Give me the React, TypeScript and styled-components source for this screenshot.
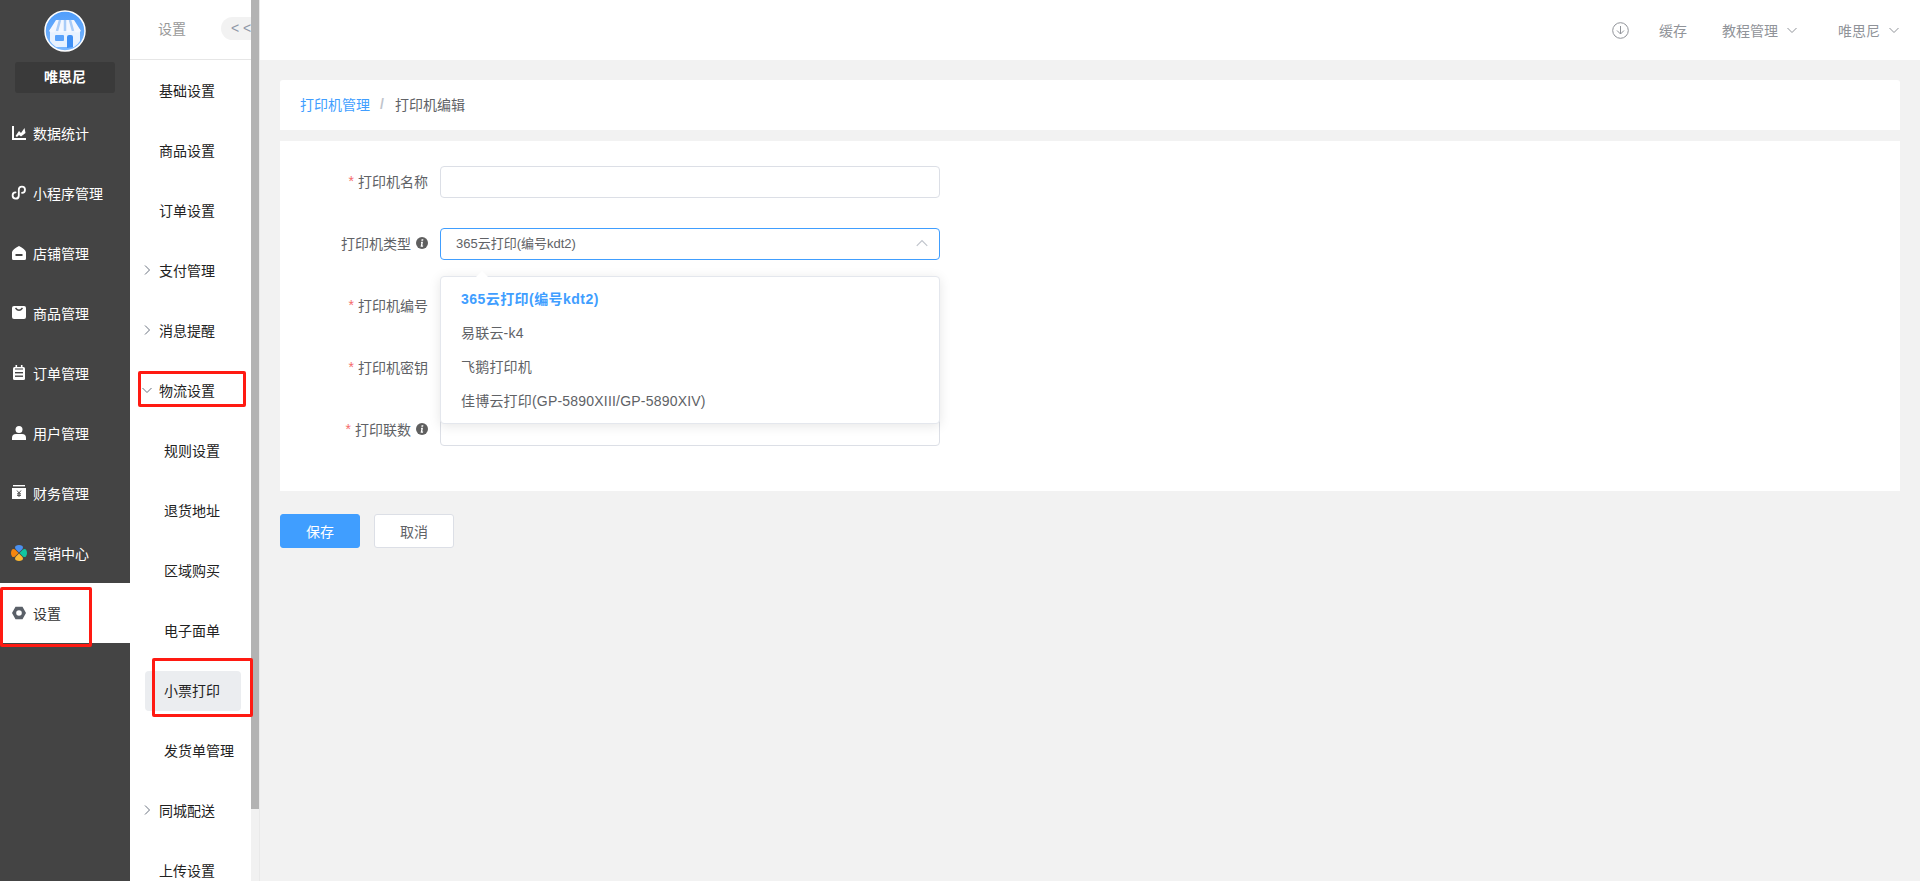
import React from "react";
import styled, { createGlobalStyle } from "styled-components";

const GlobalStyle = createGlobalStyle`
  html, body {
    margin: 0;
    padding: 0;
    height: 100%;
    overflow: hidden;
    background: #f2f2f2;
    font-family: "Liberation Sans", "Noto Sans CJK SC", sans-serif;
    font-size: 14px;
  }
  * {
    box-sizing: border-box;
  }
`;

const Page = styled.div`
  position: relative;
  display: flex;
  width: 1920px;
  height: 881px;
  overflow: hidden;
`;

const Rail = styled.nav`
  flex: 0 0 130px;
  display: flex;
  flex-direction: column;
  background: #444444;
`;

const Brand = styled.div`
  display: flex;
  flex-direction: column;
  align-items: center;
  padding-top: 10px;
  margin-bottom: 10px;
`;

const BrandName = styled.div`
  width: 100px;
  height: 31px;
  margin-top: 10px;
  border-radius: 3px;
  background: #3a3a3a;
  color: #fff;
  font-weight: 700;
  line-height: 31px;
  text-align: center;
`;

const RailItem = styled.div<{ $active?: boolean }>`
  display: flex;
  align-items: center;
  gap: 7px;
  height: 60px;
  padding-left: 12px;
  background: ${(p) => (p.$active ? "#fff" : "transparent")};
  color: ${(p) => (p.$active ? "#333" : "#fff")};
`;

const RailIcon = styled.svg`
  flex: 0 0 14px;
  width: 14px;
  height: 14px;
  overflow: visible;
`;

const SubNav = styled.div`
  flex: 0 0 130px;
  min-width: 0;
  display: flex;
  height: 881px;
  background: #fff;
  border-right: 1px solid #e9e9e9;
`;

const SubPane = styled.div`
  flex: 1;
  min-width: 0;
  overflow: hidden;
`;

const ScrollTrack = styled.div`
  flex: 0 0 8px;
  background: #f1f1f1;
`;

const ScrollThumb = styled.div`
  height: 809px;
  background: #b3b3b3;
`;

const SubHeader = styled.div`
  display: flex;
  align-items: center;
  height: 60px;
  padding: 0 0 3px 28px;
  border-bottom: 1px solid #e6e6e6;
  color: #999;
  white-space: nowrap;
  overflow: hidden;
`;

const Collapse = styled.div`
  flex: 0 0 44px;
  height: 23px;
  margin-left: 35px;
  padding-left: 10px;
  border-radius: 12px;
  background: #f2f2f2;
  color: #8f98a8;
  line-height: 22px;
`;

const SubList = styled.div`
  display: flex;
  flex-direction: column;
  padding-top: 1px;
`;

const SubItem = styled.div`
  display: flex;
  align-items: center;
  height: 60px;
  padding: 0 0 2px 11px;
  color: #222;
`;

const Caret = styled.span`
  display: flex;
  flex: 0 0 18px;
  color: #6b7380;
`;

const SubChild = styled.div<{ $active?: boolean }>`
  height: 40px;
  margin: 10px 10px 10px 15px;
  padding-left: 19px;
  border-radius: 4px;
  background: ${(p) => (p.$active ? "#ebedf0" : "transparent")};
  color: #222;
  line-height: 40px;
  white-space: nowrap;
`;

const Body = styled.div`
  flex: 1;
  min-width: 0;
  display: flex;
  flex-direction: column;
`;

const TopBar = styled.header`
  display: flex;
  align-items: center;
  justify-content: flex-end;
  height: 60px;
  padding-right: 20px;
  background: #fff;
  color: #909399;
`;

const TopLink = styled.div<{ $gap: number }>`
  display: flex;
  align-items: center;
  gap: 8px;
  margin-left: ${(p) => p.$gap}px;
`;

const Main = styled.main`
  padding: 20px 20px 0;
`;

const Crumbs = styled.div`
  display: flex;
  align-items: center;
  height: 50px;
  margin-bottom: 11px;
  padding: 0 0 2px 20px;
  border-radius: 3px 3px 0 0;
  background: #fff;
  color: #606266;
`;

const CrumbLink = styled.span`
  color: #409eff;
`;

const CrumbSep = styled.span`
  margin: 0 11px 0 10px;
  color: #c0c4cc;
  font-weight: 700;
`;

const FormCard = styled.section`
  padding: 25px 0 15px;
  background: #fff;
`;

const Row = styled.div`
  display: flex;
  margin-bottom: 30px;
`;

const Label = styled.label`
  display: flex;
  align-items: center;
  justify-content: flex-end;
  flex: 0 0 160px;
  height: 32px;
  padding: 0 12px 3px 0;
  color: #606266;
`;

const Star = styled.span`
  margin-right: 4px;
  color: #f56c6c;
`;

const InfoIcon = styled.svg`
  width: 12px;
  height: 12px;
  margin-left: 5px;
`;

const Field = styled.div`
  position: relative;
  width: 500px;
  height: 32px;
`;

const Input = styled.input`
  display: block;
  width: 100%;
  height: 100%;
  padding: 0 15px;
  border: 1px solid #dcdfe6;
  border-radius: 4px;
  outline: none;
  background: #fff;
`;

const SelectBox = styled.div`
  display: flex;
  align-items: center;
  justify-content: space-between;
  height: 100%;
  padding: 0 10px 3px 15px;
  border: 1px solid #409eff;
  border-radius: 4px;
  color: #606266;
  font-size: 13px;
`;

const Dropdown = styled.ul`
  position: absolute;
  top: 48px;
  left: 0;
  z-index: 5;
  width: 100%;
  margin: 0;
  padding: 5px 0;
  border: 1px solid #e4e7ed;
  border-radius: 4px;
  background: #fff;
  box-shadow: 0 2px 12px rgba(0, 0, 0, 0.1);
  list-style: none;

  &::before {
    content: "";
    position: absolute;
    top: -6px;
    left: 35px;
    border-width: 0 6px 6px;
    border-style: solid;
    border-color: transparent transparent #fff;
  }
`;

const Option = styled.li<{ $selected?: boolean }>`
  height: 34px;
  padding: 0 20px;
  color: ${(p) => (p.$selected ? "#409eff" : "#606266")};
  font-weight: ${(p) => (p.$selected ? 700 : 400)};
  letter-spacing: ${(p) => (p.$selected ? "0.45px" : "0.2px")};
  line-height: 34px;
`;

const Actions = styled.div`
  display: flex;
  gap: 14px;
  margin-top: 23px;
`;

const Button = styled.button<{ $primary?: boolean }>`
  width: 80px;
  height: 34px;
  padding: 0;
  border: 1px solid ${(p) => (p.$primary ? "#409eff" : "#dcdfe6")};
  border-radius: 3px;
  background: ${(p) => (p.$primary ? "#409eff" : "#fff")};
  color: ${(p) => (p.$primary ? "#fff" : "#606266")};
  font: inherit;
`;

const Callout = styled.div<{ $x: number; $y: number; $w: number; $h: number }>`
  position: absolute;
  left: ${(p) => p.$x}px;
  top: ${(p) => p.$y}px;
  width: ${(p) => p.$w}px;
  height: ${(p) => p.$h}px;
  border: 3px solid #ff1a12;
  border-radius: 2px;
  pointer-events: none;
`;

const Chevron = ({ dir, size = 12, color = "currentColor" }: { dir: "right" | "down" | "up"; size?: number; color?: string }) => {
  const d = dir === "right" ? "M4 1.5 L8.5 6 L4 10.5" : dir === "down" ? "M1.5 4 L6 8.5 L10.5 4" : "M1.5 8.5 L6 4 L10.5 8.5";
  return (
    <svg width={size} height={size} viewBox="0 0 12 12" fill="none" stroke={color} strokeWidth="1">
      <path d={d} />
    </svg>
  );
};

const ShopLogo = () => (
  <svg width="42" height="42" viewBox="0 0 42 42">
    <defs>
      <linearGradient id="sky" x1="0" y1="0" x2="0" y2="1">
        <stop offset="0" stopColor="#4f9dfb" />
        <stop offset="1" stopColor="#7db9ff" />
      </linearGradient>
    </defs>
    <circle cx="21" cy="21" r="20" fill="url(#sky)" stroke="#fff" strokeWidth="1.5" />
    <path d="M6 31 V19 H36 V31 A 17 17 0 0 1 30 37 H12 A 17 17 0 0 1 6 31 Z" fill="#e8f2ff" />
    <path d="M12 10 H30 L37 21 Q33 24 30 21 Q26 24 21 21 Q16 24 12 21 Q8 24 5 21 Z" fill="#f3f7ff" />
    <path d="M16 10 L13 21 M21 10 V21 M26 10 L29 21" stroke="#a9ccf8" strokeWidth="2.5" />
    <rect x="11" y="25" width="9" height="6" rx="1" fill="#5ba3fb" />
    <path d="M23 38 V27 Q23 25 25 25 H27 Q29 25 29 27 V37 Z" fill="#3f90f5" />
  </svg>
);

const icons: Record<string, React.ReactNode> = {
  stats: (
    <>
      <path d="M1 0 V13 H14" fill="none" stroke="#fff" strokeWidth="2" />
      <path d="M3.5 10 L7 5 L9 7 L12.5 2 L13.5 7 L9 10.5 L7 9 L5 11 Z" fill="#fff" />
    </>
  ),
  mini: (
    <path
      d="M3.6 6.4 A3.1 3.1 0 1 0 6.8 9.6 V3.6 A3.1 3.1 0 1 1 10 6.8"
      fill="none"
      stroke="#fff"
      strokeWidth="1.8"
      strokeLinecap="round"
    />
  ),
  shop: (
    <>
      <path d="M0 6 Q1 3 7 0 Q13 3 14 6 V12.5 A1.5 1.5 0 0 1 12.5 14 H1.5 A1.5 1.5 0 0 1 0 12.5 Z" fill="#fff" />
      <rect x="3.5" y="8" width="7" height="2" fill="#444" />
    </>
  ),
  goods: (
    <>
      <rect x="0" y="0" width="14" height="13" rx="2" fill="#fff" />
      <path d="M3.5 2 Q7 6.5 10.5 2" fill="none" stroke="#444" strokeWidth="1.4" />
    </>
  ),
  order: (
    <>
      <rect x="1" y="1" width="12" height="13" rx="1.5" fill="#fff" />
      <rect x="3.5" y="-1" width="1.6" height="3" fill="#fff" />
      <rect x="8.9" y="-1" width="1.6" height="3" fill="#fff" />
      <rect x="3" y="2.5" width="8" height="1" fill="#444" />
      <rect x="3" y="6" width="8" height="1.4" fill="#444" />
      <rect x="3" y="9.5" width="8" height="1.4" fill="#444" />
    </>
  ),
  user: (
    <>
      <circle cx="7" cy="3.5" r="3.5" fill="#fff" />
      <path d="M0 14 V12 Q0 8 4 8 H10 Q14 8 14 12 V14 Z" fill="#fff" />
    </>
  ),
  finance: (
    <>
      <rect x="1" y="-1" width="12" height="1.4" fill="#fff" />
      <rect x="0" y="2" width="14" height="11" fill="#fff" />
      <path d="M5 4.5 L7 7 L9 4.5 M7 7 V11 M5 7.8 H9 M5 9.4 H9" fill="none" stroke="#444" strokeWidth="0.9" />
    </>
  ),
  market: (
    <>
      <path d="M7 6.5 L3.5 3 Q2.5 1.5 3.5 0 Q7 -2 10.5 0 Q11.5 1.5 10.5 3 Z" fill="#4a90f0" />
      <path d="M7.5 7 L11 3.5 Q12.5 2.5 14 3.5 Q16 7 14 10.5 Q12.5 11.5 11 10.5 Z" fill="#11c5a0" />
      <path d="M7 7.5 L10.5 11 Q11.5 12.5 10.5 14 Q7 16 3.5 14 Q2.5 12.5 3.5 11 Z" fill="#fbb731" />
      <path d="M6.5 7 L3 10.5 Q1.5 11.5 0 10.5 Q-2 7 0 3.5 Q1.5 2.5 3 3.5 Z" fill="#f5860f" />
    </>
  ),
  settings: (
    <path
      fillRule="evenodd"
      d="M3.5 0.8 H10.5 L14 7 L10.5 13.2 H3.5 L0 7 Z M7 4.2 A2.8 2.8 0 1 0 7 9.8 A2.8 2.8 0 1 0 7 4.2 Z"
      fill="#5a6068"
    />
  ),
};

const railItems = [
  { icon: "stats", text: "数据统计" },
  { icon: "mini", text: "小程序管理" },
  { icon: "shop", text: "店铺管理" },
  { icon: "goods", text: "商品管理" },
  { icon: "order", text: "订单管理" },
  { icon: "user", text: "用户管理" },
  { icon: "finance", text: "财务管理" },
  { icon: "market", text: "营销中心" },
  { icon: "settings", text: "设置", active: true },
];

type SubEntry = { text: string; caret?: "right" | "down"; child?: boolean; active?: boolean };

const subItems: SubEntry[] = [
  { text: "基础设置" },
  { text: "商品设置" },
  { text: "订单设置" },
  { text: "支付管理", caret: "right" },
  { text: "消息提醒", caret: "right" },
  { text: "物流设置", caret: "down" },
  { text: "规则设置", child: true },
  { text: "退货地址", child: true },
  { text: "区域购买", child: true },
  { text: "电子面单", child: true },
  { text: "小票打印", child: true, active: true },
  { text: "发货单管理", child: true },
  { text: "同城配送", caret: "right" },
  { text: "上传设置" },
];

const fields = [
  { label: "打印机名称", required: true },
  { label: "打印机类型", info: true, select: true },
  { label: "打印机编号", required: true },
  { label: "打印机密钥", required: true },
  { label: "打印联数", required: true, info: true },
];

const options = ["365云打印(编号kdt2)", "易联云-k4", "飞鹅打印机", "佳博云打印(GP-5890XIII/GP-5890XIV)"];

const App = () => (
  <Page>
    <GlobalStyle />
    <Rail>
      <Brand>
        <ShopLogo />
        <BrandName>唯思尼</BrandName>
      </Brand>
      {railItems.map((item) => (
        <RailItem key={item.text} $active={item.active}>
          <RailIcon viewBox="0 0 14 14">{icons[item.icon]}</RailIcon>
          {item.text}
        </RailItem>
      ))}
    </Rail>
    <SubNav>
      <SubPane>
        <SubHeader>
          设置
          <Collapse>{"< <"}</Collapse>
        </SubHeader>
        <SubList>
          {subItems.map((item) =>
            item.child ? (
              <SubChild key={item.text} $active={item.active}>
                {item.text}
              </SubChild>
            ) : (
              <SubItem key={item.text}>
                <Caret>{item.caret && <Chevron dir={item.caret} />}</Caret>
                {item.text}
              </SubItem>
            )
          )}
        </SubList>
      </SubPane>
      <ScrollTrack>
        <ScrollThumb />
      </ScrollTrack>
    </SubNav>
    <Body>
      <TopBar>
        <svg width="17" height="17" viewBox="0 0 17 17" fill="none" stroke="#909399" strokeWidth="1">
          <circle cx="8.5" cy="8.5" r="7.8" />
          <path d="M8.5 4 V12 M5 8.5 L8.5 12 L12 8.5" />
        </svg>
        <TopLink $gap={30}>缓存</TopLink>
        <TopLink $gap={35}>
          教程管理
          <Chevron dir="down" />
        </TopLink>
        <TopLink $gap={40}>
          唯思尼
          <Chevron dir="down" />
        </TopLink>
      </TopBar>
      <Main>
        <Crumbs>
          <CrumbLink>打印机管理</CrumbLink>
          <CrumbSep>/</CrumbSep>
          打印机编辑
        </Crumbs>
        <FormCard>
          {fields.map((field) => (
            <Row key={field.label}>
              <Label>
                {field.required && <Star>*</Star>}
                {field.label}
                {field.info && (
                  <InfoIcon viewBox="0 0 12 12">
                    <circle cx="6" cy="6" r="6" fill="#5f5f5f" />
                    <path d="M5.6 2.2 H7.4 L7.1 3.7 H5.3 Z M5.2 4.8 H7 L6.3 8.6 H7.2 L7 9.8 H4.6 L5.3 6 H4.9 Z" fill="#fff" />
                  </InfoIcon>
                )}
              </Label>
              <Field>
                {field.select ? (
                  <>
                    <SelectBox>
                      365云打印(编号kdt2)
                      <Chevron dir="up" size={14} color="#c0c4cc" />
                    </SelectBox>
                    <Dropdown>
                      {options.map((option, i) => (
                        <Option key={option} $selected={i === 0}>
                          {option}
                        </Option>
                      ))}
                    </Dropdown>
                  </>
                ) : (
                  <Input />
                )}
              </Field>
            </Row>
          ))}
        </FormCard>
        <Actions>
          <Button $primary>保存</Button>
          <Button>取消</Button>
        </Actions>
      </Main>
    </Body>
    <Callout $x={138} $y={371} $w={108} $h={36} />
    <Callout $x={0} $y={587} $w={92} $h={60} />
    <Callout $x={152} $y={658} $w={101} $h={59} />
  </Page>
);

export default App;
